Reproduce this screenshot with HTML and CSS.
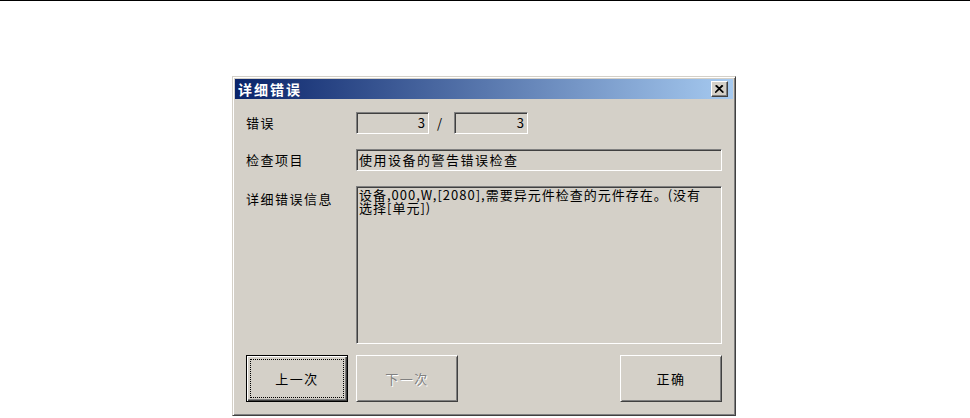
FILE: index.html
```html
<!DOCTYPE html>
<html lang="zh-CN">
<head>
<meta charset="utf-8">
<title>详细错误</title>
<link rel="stylesheet" href="styles.css">
</head>
<body>
<div class="topline"></div>
<div class="dialog">
  <div class="titlebar">
    <span class="title">详细错误</span>
    <div class="close">
      <svg width="9" height="8" viewBox="0 0 9 8"><path d="M0.5 0.5 L8 7.5 M1.5 0.5 L8.5 7.5 M8 0.5 L0.5 7.5 M7 0.5 L0 7.5" stroke="#000" stroke-width="1.2" fill="none"/></svg>
    </div>
  </div>
  <div class="body">
    <span class="label">错误</span>
    <div class="counts">
      <div class="field num">3</div>
      <span class="slash">/</span>
      <div class="field num wide">3</div>
    </div>
    <span class="label">检查项目</span>
    <div class="field text">使用设备的警告错误检查</div>
    <span class="label top">详细错误信息</span>
    <div class="field area"><span class="line">设备,000,W,[2080],需要异元件检查的元件存在。(没有</span><span class="line">选择[单元])</span></div>
  </div>
  <div class="buttons">
    <div class="btn default"><span class="focus">上一次</span></div>
    <div class="btn disabled"><span class="cap">下一次</span></div>
    <div class="btn ok"><span class="cap">正确</span></div>
  </div>
</div>
</body>
</html>
```
FILE: styles.css
```css
html, body {
  margin: 0;
  background: #fff;
  font-family: "Noto Sans CJK SC", "Liberation Sans", sans-serif;
}

.topline {
  height: 1px;
  background: #000;
}

.dialog {
  width: 504px;
  height: 340px;
  box-sizing: border-box;
  margin: 75px 0 0 232px;
  background: #d4d0c8;
  border: 1px solid;
  border-color: #d4d0c8 #404040 #404040 #d4d0c8;
  box-shadow: inset 1px 1px #fff, inset -1px -1px #808080;
  padding: 2px;
  display: flex;
  flex-direction: column;
  font-size: 13px;
  letter-spacing: 1.5px;
  color: #000;
}

.titlebar {
  height: 20px;
  flex: none;
  background: linear-gradient(to right, #0a246a, #a6caf0);
  display: flex;
  align-items: center;
  padding: 0 5px 0 3px;
}

.title {
  flex: 1;
  color: #fff;
  font-weight: bold;
  font-size: 14px;
  letter-spacing: 2px;
  line-height: 20px;
}

.close {
  width: 17px;
  height: 16px;
  box-sizing: border-box;
  background: #d4d0c8;
  border: 1px solid;
  border-color: #fff #404040 #404040 #fff;
  box-shadow: inset -1px -1px #808080;
  display: flex;
  align-items: center;
  justify-content: center;
}

.close svg {
  display: block;
}

.body {
  display: grid;
  grid-template-columns: 110px 1fr;
  grid-template-rows: 22px 22px 158px;
  row-gap: 15px;
  padding: 13px 11px 0 11px;
}

.label {
  align-self: center;
  line-height: 14px;
}

.label.top {
  align-self: start;
  margin-top: 6px;
}

.field {
  box-sizing: border-box;
  background: #d4d0c8;
  border: 1px solid;
  border-color: #808080 #fff #fff #808080;
  box-shadow: inset 1px 1px #404040, inset -1px -1px #d4d0c8;
}

.counts {
  display: flex;
  align-items: center;
}

.num {
  width: 73px;
  height: 22px;
  text-align: right;
  padding-right: 3px;
  line-height: 20px;
  letter-spacing: 0;
}

.num.wide {
  width: 74px;
}

.slash {
  width: 25px;
  text-align: center;
  letter-spacing: 0;
  line-height: 20px;
  padding-right: 4px;
  box-sizing: border-box;
}

.text {
  padding-left: 2px;
  line-height: 20px;
  white-space: nowrap;
  overflow: hidden;
}

.area {
  padding: 1px 2px;
  display: flex;
  flex-direction: column;
  letter-spacing: 1px;
}

.line {
  display: block;
  line-height: 13px;
  white-space: nowrap;
}

.buttons {
  display: flex;
  gap: 8px;
  padding: 11px 11px 0 11px;
}

.btn {
  width: 102px;
  height: 47px;
  box-sizing: border-box;
  background: #d4d0c8;
  border: 1px solid;
  border-color: #fff #404040 #404040 #fff;
  box-shadow: inset 1px 1px #d4d0c8, inset -1px -1px #808080;
  display: flex;
  align-items: center;
  justify-content: center;
  font-size: 13px;
}

.btn.default {
  border-color: #000;
  box-shadow: inset 1px 1px #fff, inset -1px -1px #404040, inset -2px -2px #808080;
  padding: 3px;
}

.focus {
  flex: 1;
  align-self: stretch;
  border: 1px dotted #000;
  display: flex;
  align-items: center;
  justify-content: center;
}

.btn.disabled .cap {
  color: #808080;
  text-shadow: 1px 1px #fff;
}

.btn.ok {
  margin-left: auto;
}
```
